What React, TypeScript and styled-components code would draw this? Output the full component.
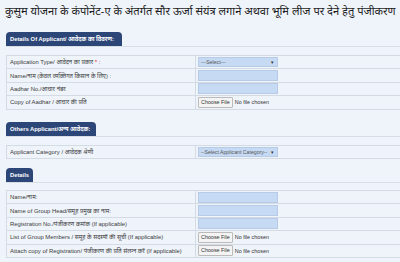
import React from "react"
import styled, { createGlobalStyle } from "styled-components"

const GlobalStyle = createGlobalStyle`
  html, body {
    margin: 0;
    padding: 0;
    background: #eff4fb;
    font-family: "Liberation Sans", Arial, "Noto Sans", sans-serif;
    overflow: hidden;
  }
`

const Page = styled.div`
  width: 400px;
  height: 262px;
  padding: 0 0 0 6px;
  box-sizing: border-box;
`

const Title = styled.h1`
  margin: 0 0 0 -1px;
  padding: 2px 0 0 0;
  height: 32px;
  box-sizing: border-box;
  font-family: "Noto Sans", "Liberation Sans", sans-serif;
  font-weight: 400;
  font-size: 11.1px;
  line-height: 18px;
  color: #1d1d1d;
  white-space: nowrap;
`

const SectionBlock = styled.section<{ $gap: number }>`
  margin-bottom: ${(p) => p.$gap}px;
`

const TabBar = styled.div<{ $space: number }>`
  border-bottom: 1px solid #d7dee8;
  height: 14px;
  margin-bottom: ${(p) => p.$space}px;
`

const Tab = styled.div<{ $width: number }>`
  width: ${(p) => p.$width}px;
  height: 14px;
  box-sizing: border-box;
  background: #2d4678;
  color: #fff;
  border-radius: 4px 4px 0 0;
  font-size: 5.8px;
  font-weight: 700;
  line-height: 14px;
  padding-left: 4px;
  white-space: nowrap;
  overflow: hidden;
  font-family: "Liberation Sans", "Noto Sans", sans-serif;
`

const Table = styled.div`
  border-top: 1px solid #d4dbe4;
  border-left: 1px solid #d4dbe4;
`

const Row = styled.div`
  display: grid;
  grid-template-columns: 189px 1fr;
  height: 12.4px;
  border-bottom: 1px solid #d4dbe4;
  box-sizing: content-box;
`

const LabelCell = styled.div`
  font-size: 5.9px;
  color: #3a3a3a;
  padding-left: 3px;
  display: flex;
  align-items: center;
  white-space: nowrap;
  border-right: 1px solid #d4dbe4;
  font-family: "Liberation Sans", "Noto Sans", sans-serif;
`

const Star = styled.span`
  color: #d12;
`

const ControlCell = styled.div`
  display: flex;
  align-items: center;
  padding-left: 2px;
`

const TextBox = styled.div`
  width: 80px;
  height: 11px;
  background: #c6daf4;
  border: 1px solid #b8cbe6;
  box-sizing: border-box;
`

const SelectBox = styled.div`
  width: 80px;
  height: 10px;
  background: #c6daf4;
  border: 1px solid #b8cbe6;
  box-sizing: border-box;
  display: flex;
  align-items: center;
  justify-content: space-between;
  padding: 0 3px 0 2px;
  font-size: 5.2px;
  color: #555;
`

const Arrow = styled.span`
  font-size: 5px;
  color: #333;
`

const FileWrap = styled.div`
  display: flex;
  align-items: center;
  gap: 2px;
`

const FileButton = styled.div`
  height: 9px;
  padding: 0 2px;
  border: 1px solid #bbb;
  background: #f4f4f4;
  font-size: 5.4px;
  line-height: 9px;
  color: #333;
  border-radius: 1px;
`

const FileText = styled.span`
  font-size: 5.4px;
  color: #333;
`

type Field =
  | { label: React.ReactNode; kind: "select"; placeholder: string }
  | { label: React.ReactNode; kind: "text" }
  | { label: React.ReactNode; kind: "file" }

const applicantFields: Field[] = [
  {
    label: (
      <>
        Application Type/ आवेदन का प्रकार&nbsp;<Star>*</Star>&nbsp;:
      </>
    ),
    kind: "select",
    placeholder: "---Select---",
  },
  { label: "Name/नाम (केवल व्यक्तिगत किसान के लिए) :", kind: "text" },
  { label: "Aadhar No./आधार नंबर", kind: "text" },
  { label: "Copy of Aadhar / आधार की प्रति", kind: "file" },
]

const otherFields: Field[] = [
  {
    label: "Applicant Category / आवेदक श्रेणी",
    kind: "select",
    placeholder: "--Select Applicant Category--",
  },
]

const detailFields: Field[] = [
  { label: "Name/नाम:", kind: "text" },
  { label: "Name of Group Head/समूह प्रमुख का नाम:", kind: "text" },
  { label: "Registration No./पंजीकरण क्रमांक (If applicable)", kind: "text" },
  { label: "List of Group Members / समूह के सदस्यों की सूची (If applicable)", kind: "file" },
  { label: "Attach copy of Registration/ पंजीकरण की प्रति संलग्न करें (If applicable)", kind: "file" },
]

const FieldControl = ({ field }: { field: Field }) => {
  if (field.kind === "select") {
    return (
      <SelectBox>
        <span>{field.placeholder}</span>
        <Arrow>▾</Arrow>
      </SelectBox>
    )
  }
  if (field.kind === "file") {
    return (
      <FileWrap>
        <FileButton>Choose File</FileButton>
        <FileText>No file chosen</FileText>
      </FileWrap>
    )
  }
  return <TextBox />
}

type SectionProps = {
  title: string
  fields: Field[]
  tabWidth: number
  space: number
  gap: number
}

const Section = ({ title, fields, tabWidth, space, gap }: SectionProps) => (
  <SectionBlock $gap={gap}>
    <TabBar $space={space}>
      <Tab $width={tabWidth}>{title}</Tab>
    </TabBar>
    <Table>
      {fields.map((f, i) => (
        <Row key={i}>
          <LabelCell>{f.label}</LabelCell>
          <ControlCell>
            <FieldControl field={f} />
          </ControlCell>
        </Row>
      ))}
    </Table>
  </SectionBlock>
)

const App = () => (
  <>
    <GlobalStyle />
    <Page>
      <Title>
        कुसुम योजना के कंपोनेंट-ए के अंतर्गत सौर ऊर्जा संयंत्र लगाने अथवा भूमि लीज पर देने हेतु पंजीकरण
      </Title>
      <Section
        title="Details Of Applicant/ आवेदक का विवरण:"
        fields={applicantFields}
        tabWidth={116}
        space={8}
        gap={12}
      />
      <Section title="Others Applicant/अन्य आवेदक:" fields={otherFields} tabWidth={90} space={8} gap={9} />
      <Section title="Details" fields={detailFields} tabWidth={27} space={7} gap={0} />
    </Page>
  </>
)

export default App
